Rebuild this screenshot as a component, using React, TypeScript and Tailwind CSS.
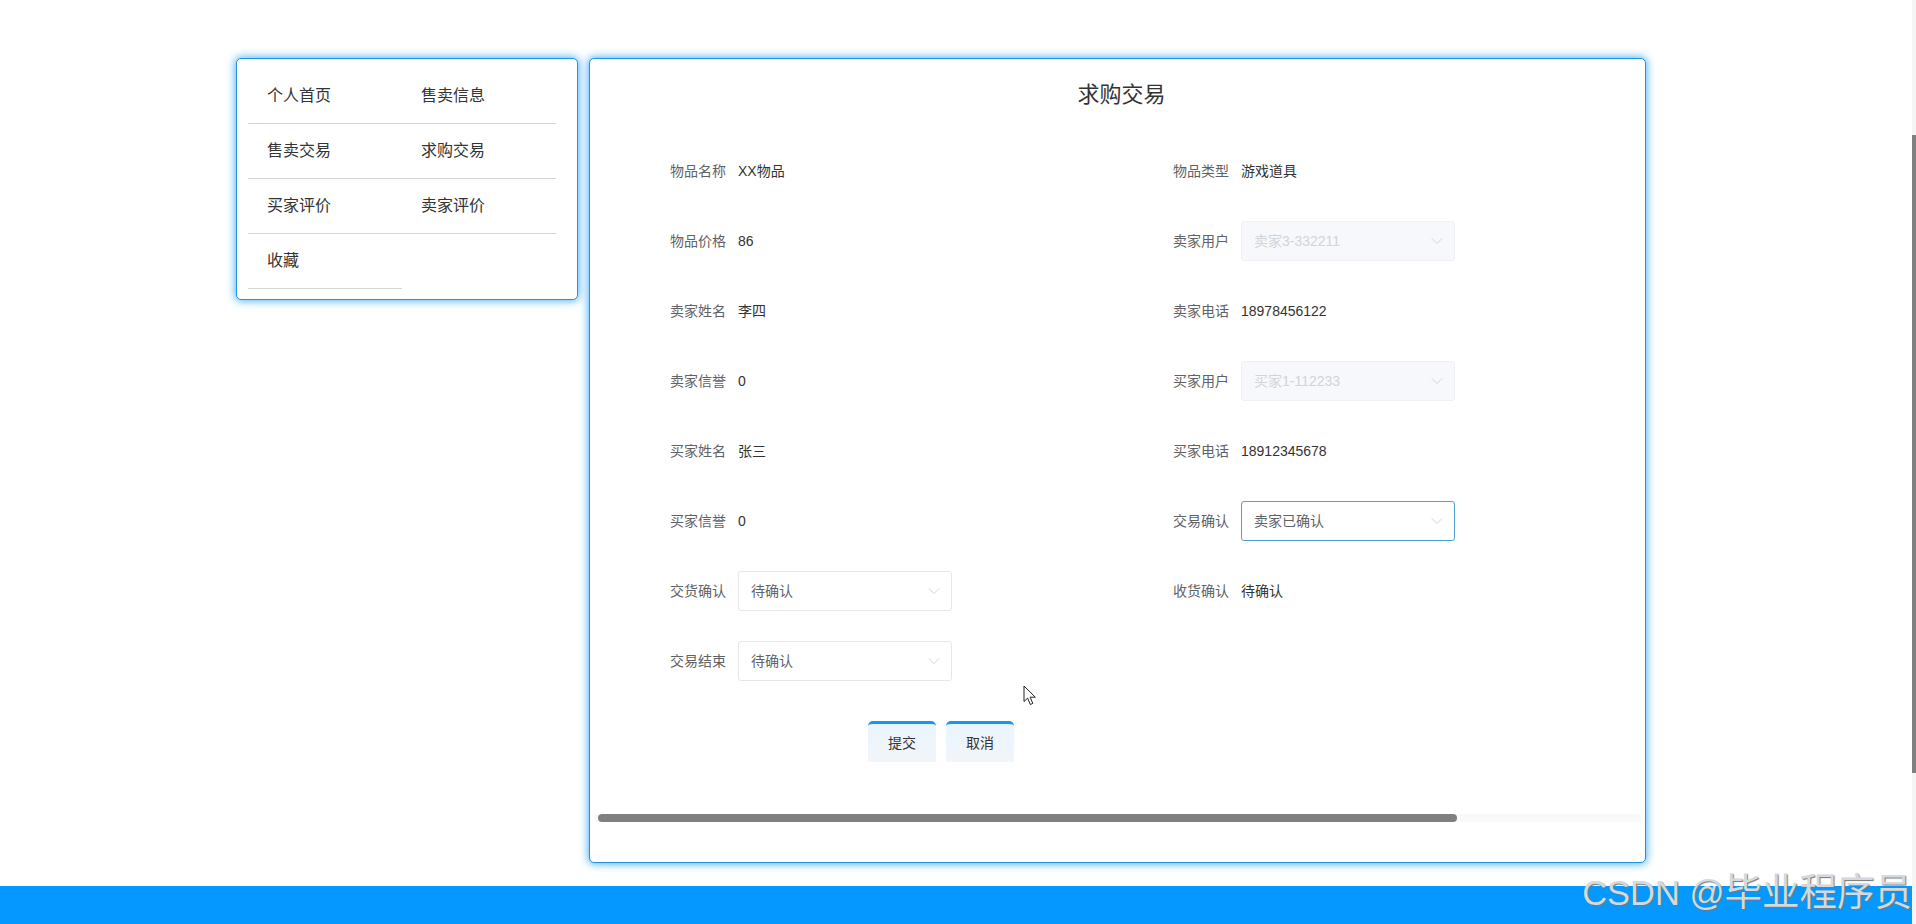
import { ChevronDown } from 'lucide-react'

const navItems = ['个人首页', '售卖信息', '售卖交易', '求购交易', '买家评价', '卖家评价', '收藏']

type Field = {
  label: string
  value: string
  kind?: 'text' | 'disabled' | 'select' | 'focus'
}

const fields: Field[] = [
  { label: '物品名称', value: 'XX物品' },
  { label: '物品类型', value: '游戏道具' },
  { label: '物品价格', value: '86' },
  { label: '卖家用户', value: '卖家3-332211', kind: 'disabled' },
  { label: '卖家姓名', value: '李四' },
  { label: '卖家电话', value: '18978456122' },
  { label: '卖家信誉', value: '0' },
  { label: '买家用户', value: '买家1-112233', kind: 'disabled' },
  { label: '买家姓名', value: '张三' },
  { label: '买家电话', value: '18912345678' },
  { label: '买家信誉', value: '0' },
  { label: '交易确认', value: '卖家已确认', kind: 'focus' },
  { label: '交货确认', value: '待确认', kind: 'select' },
  { label: '收货确认', value: '待确认' },
  { label: '交易结束', value: '待确认', kind: 'select' },
]

function SelectBox({ value, kind }: { value: string; kind: 'disabled' | 'select' | 'focus' }) {
  const tone =
    kind === 'disabled'
      ? 'border-[#eef0f3] bg-[#f7f8fb] text-[#d0d4db]'
      : kind === 'focus'
        ? 'border-[#4f9fd6] bg-white text-[#606266]'
        : 'border-[#e4e7ec] bg-white text-[#606266]'
  return (
    <div className={`flex h-10 w-[214px] items-center justify-between rounded-[3px] border pl-[12px] pr-[7px] ${tone}`}>
      <span>{value}</span>
      <ChevronDown size={20} strokeWidth={1} className="text-[#c8ccd3]" />
    </div>
  )
}

function FormRow({ label, value, kind = 'text' }: Field) {
  return (
    <div className="flex h-10 items-center">
      <label className="w-20 pr-3 text-right text-[#606266]">{label}</label>
      {kind === 'text' ? <span className="text-[#333333]">{value}</span> : <SelectBox value={value} kind={kind} />}
    </div>
  )
}

export default function App() {
  return (
    <div className="flex h-screen w-full overflow-hidden bg-white font-['Liberation_Sans','Noto_Sans_CJK_SC',sans-serif] text-sm">
      <div className="flex min-w-0 flex-1 flex-col">
        <div className="flex flex-1 items-start gap-[11px] pl-[236px] pt-[58px]">
          <aside className="w-[342px] rounded-[5px] border border-[#2593dc] bg-white pb-[10px] pl-[11px] pt-[10px] shadow-[0_0_9px_1px_#4db2ff]">
            <ul className="grid grid-cols-[154px_154px]">
              {navItems.map((item) => (
                <li
                  key={item}
                  className="h-[55px] border-b border-[#d4d4d4] pl-[19px] text-base leading-[54px] text-[#333333]"
                >
                  {item}
                </li>
              ))}
            </ul>
          </aside>

          <main className="relative h-[805px] w-[1057px] rounded-[5px] border border-[#2593dc] bg-white shadow-[0_0_9px_1px_#4db2ff]">
            <h1 className="flex h-[72px] items-center justify-center pl-2 text-[22px] text-[#333333]">求购交易</h1>

            <form className="ml-[68px] mt-[20px]">
              <div className="grid grid-cols-[503px_503px] gap-y-[30px]">
                {fields.map((field) => (
                  <FormRow key={field.label} {...field} />
                ))}
              </div>

              <div className="mt-10 flex justify-start gap-[10px] pl-[210px]">
                {['提交', '取消'].map((text) => (
                  <button
                    key={text}
                    type="button"
                    className="h-[41px] w-[68px] rounded-t-[5px] border-t-[3px] border-[#1497f0] bg-gradient-to-b from-[#e9f5fd] to-[#f2f5f9] text-[#333333]"
                  >
                    {text}
                  </button>
                ))}
              </div>
            </form>

            <div className="ml-[5px] mr-[4px] mt-[52px] h-2 bg-[#f9f9f9] pl-[3px]">
              <div className="h-2 w-[859px] rounded-full bg-[#808080]" />
            </div>

            <svg className="absolute left-[433px] top-[626px]" width="14" height="21" viewBox="0 0 14 21">
              <path
                d="M1 1v15.5l3.6-3.4 2.7 6.4 2.5-1.1-2.7-6.2h5.2z"
                fill="#ffffff"
                stroke="#222222"
                strokeWidth="1"
                strokeLinejoin="round"
              />
            </svg>
          </main>
        </div>

        <footer className="relative h-[38px] bg-[#0598ff]">
          <div className="absolute bottom-[9px] right-0 flex items-baseline whitespace-nowrap leading-[44px] text-[#d3d9df] [text-shadow:1px_1px_1px_#777777]">
            <span className="text-[34.5px]">CSDN @</span>
            <span className="text-[37.5px]">毕业程序员</span>
          </div>
        </footer>
      </div>

      <div className="w-1 bg-[#f5f5f5] pt-[135px]">
        <div className="h-[638px] bg-[#808080]" />
      </div>
    </div>
  )
}
